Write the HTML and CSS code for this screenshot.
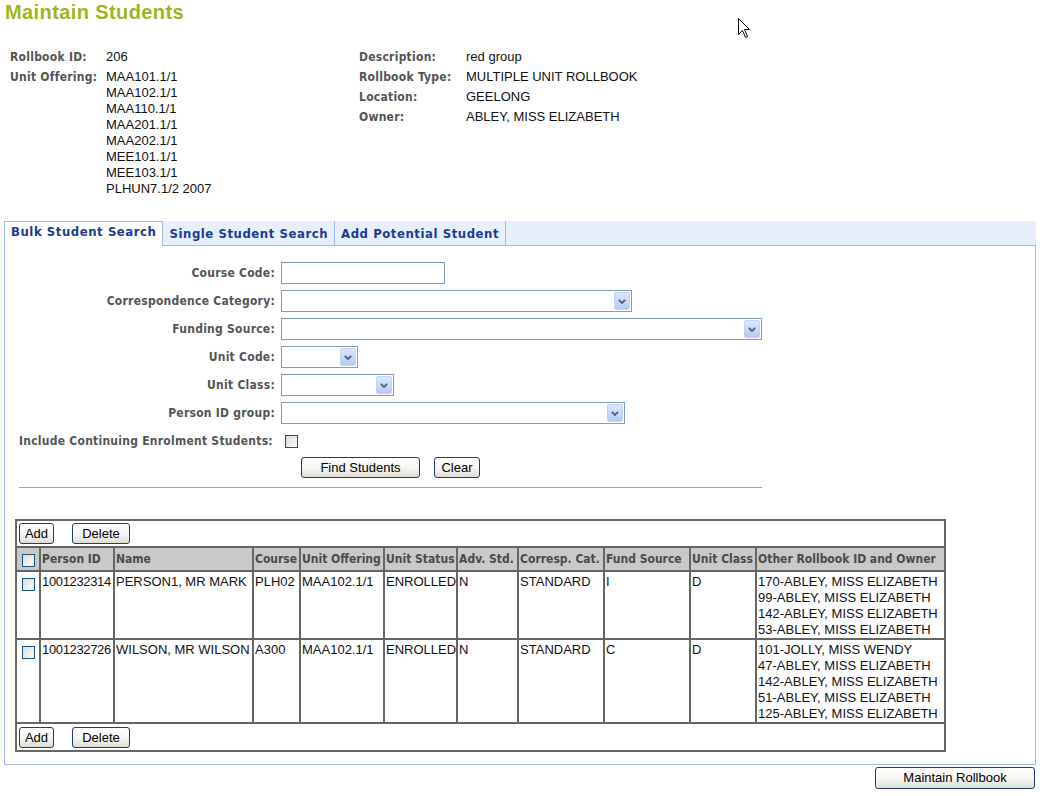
FILE: index.html
```html
<!DOCTYPE html>
<html lang="en">
<head>
<meta charset="utf-8">
<title>Maintain Students</title>
<link rel="stylesheet" href="styles.css">
</head>
<body>
<span class="deco deco-a"></span>
<span class="deco deco-b"></span>

<h1 class="title">Maintain Students</h1>

<div class="info">
  <dl class="info-col info-left">
    <dt>Rollbook ID:</dt><dd>206</dd>
    <dt>Unit Offering:</dt>
    <dd>MAA101.1/1<br>MAA102.1/1<br>MAA110.1/1<br>MAA201.1/1<br>MAA202.1/1<br>MEE101.1/1<br>MEE103.1/1<br>PLHUN7.1/2 2007</dd>
  </dl>
  <dl class="info-col info-right">
    <dt>Description:</dt><dd>red group</dd>
    <dt>Rollbook Type:</dt><dd>MULTIPLE UNIT ROLLBOOK</dd>
    <dt>Location:</dt><dd>GEELONG</dd>
    <dt>Owner:</dt><dd>ABLEY, MISS ELIZABETH</dd>
  </dl>
</div>

<div class="tabs">
  <div class="tab tab-active">Bulk Student Search</div>
  <div class="tab">Single Student Search</div>
  <div class="tab">Add Potential Student</div>
</div>

<div class="panel">
  <div class="form">
    <label class="lbl">Course Code:</label>
    <div class="field"><span class="text w-course"></span></div>

    <label class="lbl">Correspondence Category:</label>
    <div class="field"><span class="select w-corr"><span class="arrow"><svg width="8" height="5" viewBox="0 0 8 5"><path d="M0.8 0.8 L4 4 L7.2 0.8" fill="none" stroke="#4b5f86" stroke-width="1.8"/></svg></span></span></div>

    <label class="lbl">Funding Source:</label>
    <div class="field"><span class="select w-fund"><span class="arrow"><svg width="8" height="5" viewBox="0 0 8 5"><path d="M0.8 0.8 L4 4 L7.2 0.8" fill="none" stroke="#4b5f86" stroke-width="1.8"/></svg></span></span></div>

    <label class="lbl">Unit Code:</label>
    <div class="field"><span class="select w-ucode"><span class="arrow"><svg width="8" height="5" viewBox="0 0 8 5"><path d="M0.8 0.8 L4 4 L7.2 0.8" fill="none" stroke="#4b5f86" stroke-width="1.8"/></svg></span></span></div>

    <label class="lbl">Unit Class:</label>
    <div class="field"><span class="select w-uclass"><span class="arrow"><svg width="8" height="5" viewBox="0 0 8 5"><path d="M0.8 0.8 L4 4 L7.2 0.8" fill="none" stroke="#4b5f86" stroke-width="1.8"/></svg></span></span></div>

    <label class="lbl">Person ID group:</label>
    <div class="field"><span class="select w-person"><span class="arrow"><svg width="8" height="5" viewBox="0 0 8 5"><path d="M0.8 0.8 L4 4 L7.2 0.8" fill="none" stroke="#4b5f86" stroke-width="1.8"/></svg></span></span></div>

    <label class="lbl lbl-check">Include Continuing Enrolment Students:</label>
    <div class="field"><span class="check check-form"></span></div>
  </div>

  <div class="actions">
    <button class="btn btn-find">Find Students</button>
    <button class="btn btn-clear">Clear</button>
  </div>
  <hr class="divider">

  <table class="grid">
    <tr class="bar">
      <td colspan="11"><div class="bar-inner"><button class="btn btn-add">Add</button><button class="btn btn-del">Delete</button></div></td>
    </tr>
    <tr>
      <th class="c-chk"><span class="check"></span></th>
      <th class="c-id">Person ID</th>
      <th class="c-name">Name</th>
      <th class="c-course">Course</th>
      <th class="c-uo">Unit Offering</th>
      <th class="c-us">Unit Status</th>
      <th class="c-adv">Adv. Std.</th>
      <th class="c-cat">Corresp. Cat.</th>
      <th class="c-fund">Fund Source</th>
      <th class="c-class">Unit Class</th>
      <th class="c-other">Other Rollbook ID and Owner</th>
    </tr>
    <tr class="row">
      <td><span class="check"></span></td>
      <td class="num">1001232314</td>
      <td>PERSON1, MR MARK</td>
      <td>PLH02</td>
      <td>MAA102.1/1</td>
      <td>ENROLLED</td>
      <td>N</td>
      <td>STANDARD</td>
      <td>I</td>
      <td>D</td>
      <td>170-ABLEY, MISS ELIZABETH<br>99-ABLEY, MISS ELIZABETH<br>142-ABLEY, MISS ELIZABETH<br>53-ABLEY, MISS ELIZABETH</td>
    </tr>
    <tr class="row">
      <td><span class="check"></span></td>
      <td class="num">1001232726</td>
      <td>WILSON, MR WILSON</td>
      <td>A300</td>
      <td>MAA102.1/1</td>
      <td>ENROLLED</td>
      <td>N</td>
      <td>STANDARD</td>
      <td>C</td>
      <td>D</td>
      <td>101-JOLLY, MISS WENDY<br>47-ABLEY, MISS ELIZABETH<br>142-ABLEY, MISS ELIZABETH<br>51-ABLEY, MISS ELIZABETH<br>125-ABLEY, MISS ELIZABETH</td>
    </tr>
    <tr class="bar bar-bottom">
      <td colspan="11"><div class="bar-inner"><button class="btn btn-add">Add</button><button class="btn btn-del">Delete</button></div></td>
    </tr>
  </table>
</div>

<div class="footer">
  <button class="btn btn-rollbook">Maintain Rollbook</button>
</div>

<svg class="cursor" width="13" height="21" viewBox="0 0 13 21"><path d="M0.5 0.5 L0.5 16.5 L4.5 12.5 L7.5 19.5 L9.5 18.5 L6.5 11.5 L11.5 11.5 Z" fill="#fff" stroke="#000" stroke-width="1"/></svg>
</body>
</html>
```

FILE: styles.css
```css
* { box-sizing: border-box; }

html, body {
  margin: 0;
  padding: 0;
  background: #fff;
}

body {
  position: relative;
  min-height: 796px;
  overflow: hidden;
  font-family: "Liberation Sans", Arial, sans-serif;
  font-size: 13px;
  color: #111;
}

.title {
  margin: 0;
  padding-left: 5px;
  font: bold 20px/24px "Liberation Sans", Arial, sans-serif;
  letter-spacing: 0.4px;
  color: #9db51e;
}

/* header info */
.info {
  display: flex;
  margin-top: 25px;
  padding-left: 10px;
}

.info-col {
  display: grid;
  row-gap: 4px;
  margin: 0;
  align-content: start;
  line-height: 16px;
}

.info-col dt {
  font: bold 12px/16px "DejaVu Sans Condensed", "DejaVu Sans", sans-serif;
  letter-spacing: 0.25px;
  color: #555;
}

.info-col dd { margin: 0; }

.info-left {
  grid-template-columns: 96px auto;
  width: 349px;
}

.info-right { grid-template-columns: 107px auto; }

/* tabs */
.tabs {
  display: flex;
  align-items: flex-start;
  height: 24px;
  margin: 24px 7px 0 4px;
  background: #e7effc;
}

.tab {
  height: 24px;
  padding: 5px 6px 3px;
  border-right: 1px solid #9dbbe9;
  font: bold 13px/16px "DejaVu Sans Condensed", "DejaVu Sans", sans-serif;
  letter-spacing: 0.55px;
  color: #1b3c8e;
  white-space: nowrap;
}

.tab-active {
  position: relative;
  z-index: 1;
  height: 25px;
  padding: 2px 6px 6px;
  background: #fff;
  border: 1px solid #9dbbe9;
  border-bottom: 0;
}

/* panel */
.panel {
  margin: 0 7px 0 4px;
  padding: 16px 0 12px 10px;
  border: 1px solid #9dbbe9;
}

.form {
  display: grid;
  grid-template-columns: 256px 1fr;
  grid-auto-rows: 22px;
  column-gap: 6px;
  row-gap: 6px;
  width: 743px;
  margin-left: 4px;
}

.lbl {
  font: bold 12px/22px "DejaVu Sans Condensed", "DejaVu Sans", sans-serif;
  letter-spacing: 0.25px;
  color: #555;
  text-align: right;
  white-space: nowrap;
}

.lbl-check { padding-right: 5px; }

.field {
  display: flex;
  align-items: center;
}

.text, .select {
  display: flex;
  height: 22px;
  border: 1px solid #7f9db9;
  background: #fff;
}

.select {
  justify-content: flex-end;
  align-items: center;
  padding: 1px;
}

.arrow {
  display: flex;
  align-items: center;
  justify-content: center;
  width: 16px;
  height: 18px;
  border: 1px solid #c3d3f5;
  border-radius: 2px;
  background: linear-gradient(#dbe6fd, #b6caf7);
}

.w-course { width: 164px; }
.w-corr { width: 351px; }
.w-fund { width: 100%; }
.w-ucode { width: 77px; }
.w-uclass { width: 113px; }
.w-person { width: 344px; }

.check {
  display: block;
  width: 13px;
  height: 13px;
  border: 1px solid #1c5180;
  background: linear-gradient(135deg, #dcdcd6, #fbfbfa);
}

.check-form { margin-left: 4px; }

/* buttons */
.btn {
  display: block;
  height: 21px;
  margin: 0;
  padding: 0;
  border: 1px solid #1f3d6b;
  border-radius: 3px;
  background: linear-gradient(#ffffff 0%, #f5f5f1 55%, #deded6 100%);
  font: 13px/19px "Liberation Sans", Arial, sans-serif;
  color: #000;
  text-align: center;
}

.actions {
  display: flex;
  justify-content: center;
  gap: 14px;
  width: 743px;
  margin: 5px 0 0 4px;
}

.btn-find { width: 119px; }
.btn-clear { width: 46px; }

.divider {
  width: 743px;
  height: 0;
  margin: 9px 0 0 4px;
  border: 0;
  border-top: 1px solid #a3a3a3;
}

/* grid */
.grid {
  margin-top: 31px;
  border-collapse: collapse;
  border: 2px solid #666;
}

.grid th, .grid td {
  box-sizing: content-box;
  padding: 2px 0 0 1px;
  border: 2px solid #666;
  vertical-align: top;
  text-align: left;
  white-space: nowrap;
  line-height: 16px;
}

.grid td.num { letter-spacing: -0.35px; }

.grid th {
  padding: 3px 0 3px 1px;
  background: #c9c9c9;
  font: bold 12px/16px "DejaVu Sans Condensed", "DejaVu Sans", sans-serif;
  color: #4a4a4a;
}

.grid th .check { margin: 3px 0 0 4px; }
.grid .row td .check { margin: 4px 0 0 4px; }

.grid .bar td { padding: 2px 2px; }
.grid .bar-bottom td { padding: 3px 2px 2px; }

.bar-inner { display: flex; }
.btn-add { width: 35px; }
.btn-del { width: 58px; margin-left: 18px; }

.c-chk { width: 21px; }
.c-id { width: 71px; }
.c-name { width: 136px; }
.c-course { width: 44px; }
.c-uo { width: 81px; }
.c-us { width: 70px; }
.c-adv { width: 58px; }
.c-cat { width: 83px; }
.c-fund { width: 83px; }
.c-class { width: 63px; }
.c-other { width: 186px; }

/* footer */
.footer {
  display: flex;
  justify-content: flex-end;
  margin: 2px 8px 0 4px;
}

.btn-rollbook {
  width: 160px;
  height: 22px;
  line-height: 20px;
}

/* overlays */
.deco {
  position: absolute;
  background: #f3f6dc;
  z-index: -1;
}

.deco-a {
  left: 1031px;
  top: 702px;
  width: 24px;
  height: 18px;
  border-radius: 12px 0 0 12px;
}

.deco-b {
  left: 930px;
  top: 784px;
  width: 22px;
  height: 14px;
  border-radius: 10px 10px 0 0;
}

.cursor {
  position: absolute;
  left: 738px;
  top: 18px;
}
```
